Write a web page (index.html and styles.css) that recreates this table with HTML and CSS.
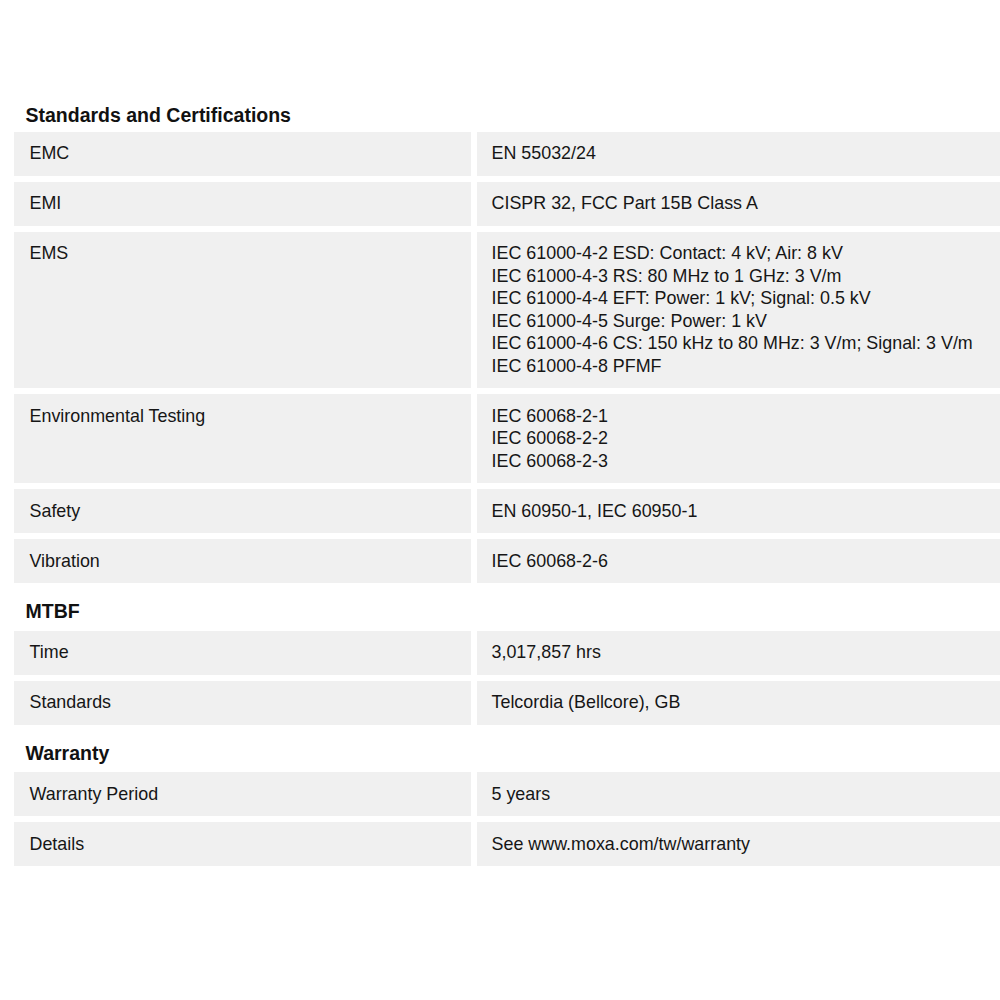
FILE: index.html
```html
<!DOCTYPE html>
<html lang="en">
<head>
<meta charset="utf-8">
<title>Specifications</title>
<link rel="stylesheet" href="styles.css">
</head>
<body>
<main class="spec">
  <section class="group">
    <h2 class="group-title">Standards and Certifications</h2>
    <div class="table">
      <div class="cell key">EMC</div><div class="cell val">EN 55032/24</div>
      <div class="cell key">EMI</div><div class="cell val">CISPR 32, FCC Part 15B Class A</div>
      <div class="cell key">EMS</div>
      <div class="cell val">IEC 61000-4-2 ESD: Contact: 4 kV; Air: 8 kV<br>IEC 61000-4-3 RS: 80 MHz to 1 GHz: 3 V/m<br>IEC 61000-4-4 EFT: Power: 1 kV; Signal: 0.5 kV<br>IEC 61000-4-5 Surge: Power: 1 kV<br>IEC 61000-4-6 CS: 150 kHz to 80 MHz: 3 V/m; Signal: 3 V/m<br>IEC 61000-4-8 PFMF</div>
      <div class="cell key">Environmental Testing</div>
      <div class="cell val">IEC 60068-2-1<br>IEC 60068-2-2<br>IEC 60068-2-3</div>
      <div class="cell key">Safety</div><div class="cell val">EN 60950-1, IEC 60950-1</div>
      <div class="cell key">Vibration</div><div class="cell val">IEC 60068-2-6</div>
    </div>
  </section>
  <section class="group">
    <h2 class="group-title">MTBF</h2>
    <div class="table">
      <div class="cell key">Time</div><div class="cell val">3,017,857 hrs</div>
      <div class="cell key">Standards</div><div class="cell val">Telcordia (Bellcore), GB</div>
    </div>
  </section>
  <section class="group">
    <h2 class="group-title">Warranty</h2>
    <div class="table">
      <div class="cell key">Warranty Period</div><div class="cell val">5 years</div>
      <div class="cell key">Details</div><div class="cell val">See www.moxa.com/tw/warranty</div>
    </div>
  </section>
</main>
</body>
</html>
```

FILE: styles.css
```css
html, body {
  margin: 0;
  padding: 0;
  background: #ffffff;
}

body {
  font-family: "Liberation Sans", Arial, Helvetica, sans-serif;
  color: #161616;
}

.spec {
  padding: 102.5px 0 0 14px;
  display: flex;
  flex-direction: column;
  gap: 16px;
}

.group-title {
  margin: 0 0 5px 0;
  padding-left: 11.5px;
  font-size: 19.5px;
  line-height: 24px;
  font-weight: 700;
  color: #111111;
}

.group + .group .group-title {
  margin-bottom: 7.5px;
}

.table {
  display: grid;
  grid-template-columns: 457px 1fr;
  column-gap: 6px;
  row-gap: 6px;
}

.cell {
  background: #f0f0f0;
  font-size: 17.9px;
  line-height: 22.5px;
  padding: 10.75px 0;
}

.key {
  padding-left: 15.5px;
}

.val {
  padding-left: 14.5px;
}
```
